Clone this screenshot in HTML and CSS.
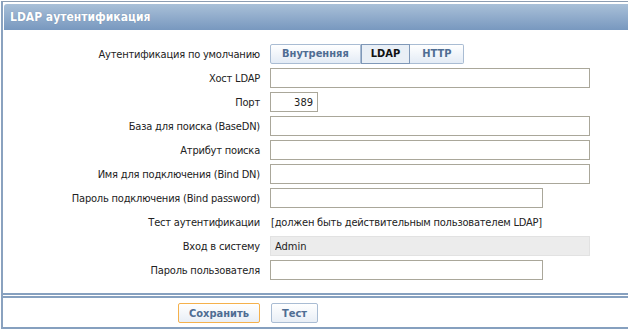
FILE: index.html
```html
<!DOCTYPE html>
<html lang="ru">
<head>
    <meta charset="UTF-8">
    <title>LDAP аутентификация</title>
    <link rel="stylesheet" href="styles.css">
</head>
<body>
    <div class="frame">
        <div class="header">LDAP аутентификация</div>

        <div class="form">
            <label>Аутентификация по умолчанию</label>
            <div class="segments">
                <span class="seg">Внутренняя</span>
                <span class="seg active">LDAP</span>
                <span class="seg">HTTP</span>
            </div>

            <label>Хост LDAP</label>
            <input type="text" class="wide">

            <label>Порт</label>
            <input type="text" class="port" value="389">

            <label>База для поиска (BaseDN)</label>
            <input type="text" class="wide">

            <label>Атрибут поиска</label>
            <input type="text" class="wide">

            <label>Имя для подключения (Bind DN)</label>
            <input type="text" class="wide">

            <label>Пароль подключения (Bind password)</label>
            <input type="password" class="medium">

            <label>Тест аутентификации</label>
            <span class="note">[должен быть действительным пользователем LDAP]</span>

            <label>Вход в систему</label>
            <input type="text" class="wide readonly" value="Admin" readonly>

            <label>Пароль пользователя</label>
            <input type="password" class="medium">
        </div>

        <div class="footer">
            <div class="left"><button class="btn main">Сохранить</button></div>
            <div><button class="btn">Тест</button></div>
        </div>
    </div>
</body>
</html>
```

FILE: styles.css
```css
body {
    margin: 0;
    padding: 0;
    background: #ffffff;
    font-family: "DejaVu Sans Condensed", "DejaVu Sans", Verdana, sans-serif;
    font-size: 11px;
    letter-spacing: -0.2px;
    color: #222222;
}
.frame {
    margin-top: 1px;
    margin-left: 1px;
    border-top: 1px solid #8c9db2;
    border-left: 2px solid #8aa2bf;
    padding-top: 2px;
}
.header {
    margin-left: 1px;
    height: 26px;
    line-height: 26px;
    padding-left: 6px;
    border-top-left-radius: 3px;
    background: linear-gradient(#a9c0d8, #7898bf);
    color: #ffffff;
    font-weight: bold;
    font-size: 12px;
    letter-spacing: 0;
    text-shadow: 0 0 1px rgba(60, 80, 110, 0.4);
}
.form {
    display: grid;
    grid-template-columns: 257px 1fr;
    column-gap: 10px;
    row-gap: 4px;
    grid-auto-rows: 20px;
    align-items: center;
    padding: 14px 0 13px;
    border-bottom: 2px solid #86a0bf;
}
.form label {
    text-align: right;
    white-space: nowrap;
}
input {
    box-sizing: border-box;
    height: 20px;
    border: 1px solid #aaa79a;
    padding: 0 4px;
    font-family: "DejaVu Sans Condensed", "DejaVu Sans", Verdana, sans-serif;
    font-size: 11px;
    color: #222222;
    background: #ffffff;
}
.wide {
    width: 320px;
}
.medium {
    width: 273px;
}
.port {
    width: 48px;
    text-align: right;
}
.readonly {
    background: #ececec;
    border-color: #e2e2e2;
}
.note {
    white-space: nowrap;
    padding-left: 1px;
}
.segments {
    display: flex;
}
.seg {
    box-sizing: border-box;
    height: 20px;
    line-height: 18px;
    padding: 0 11px;
    border: 1px solid #a9bcd3;
    border-left-width: 0;
    background: linear-gradient(#ffffff, #e3ebf5);
    color: #4f6d93;
    font-weight: bold;
    letter-spacing: 0;
}
.seg:first-child {
    border-left-width: 1px;
    border-radius: 2px 0 0 2px;
}
.seg:last-child {
    border-radius: 0 2px 2px 0;
    padding: 0 12px;
}
.seg.active {
    border: 1px solid #7f98b8;
    background: #e9eff6;
    color: #111111;
    padding: 0 9px;
}
.footer {
    display: grid;
    grid-template-columns: 257px 1fr;
    column-gap: 11px;
    margin-top: 1px;
    padding: 5px 0 4px;
    border-top: 2px solid #86a0bf;
    border-bottom: 2px solid #86a0bf;
}
.footer .left {
    text-align: right;
}
.btn {
    height: 20px;
    padding: 0 10px;
    border: 1px solid #a9bcd3;
    border-radius: 2px;
    background: linear-gradient(#ffffff, #e8eef6);
    color: #4f6d93;
    font-family: "DejaVu Sans Condensed", "DejaVu Sans", Verdana, sans-serif;
    font-size: 11px;
    font-weight: bold;
    cursor: pointer;
}
.btn.main {
    border-color: #f5b14c;
}
```
